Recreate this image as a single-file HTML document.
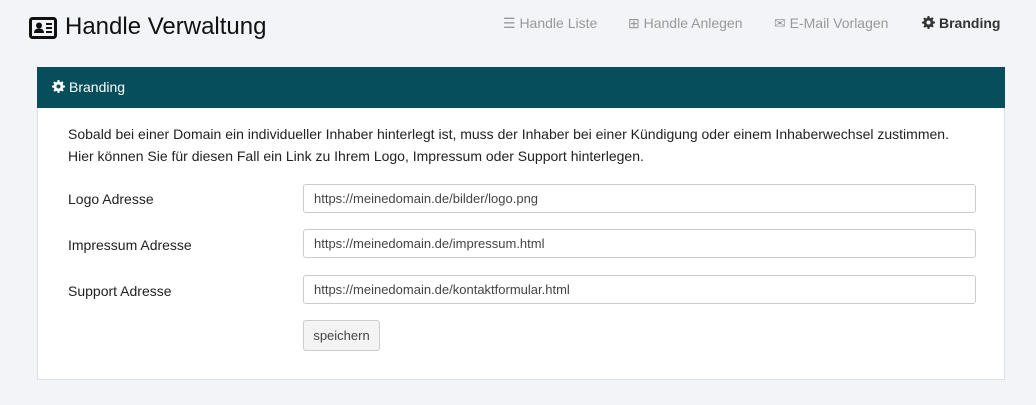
<!DOCTYPE html>
<html><head><style>
body{margin:0;background:#f3f4f8;font-family:"Liberation Sans",sans-serif;width:1036px;height:405px;overflow:hidden;position:relative}
.t{position:absolute;left:65px;top:13px;font-size:24px;color:#111}
.ic{position:absolute;left:29px;top:17px}
.nav{position:absolute;top:15px;font-size:14px;color:#999}
.panel{position:absolute;left:37px;top:67px;width:968px;height:313px;background:#fff;border:1px solid #dde0e4;box-sizing:border-box}
.hd{height:41px;background:#064e5b;color:#fff;font-size:14px;line-height:41px;padding-left:15px;margin:-1px -1px 0 -1px}
p{position:absolute;left:30px;top:55px;margin:0;font-size:14px;line-height:22px;color:#222}
.l{position:absolute;left:30px;font-size:14px;color:#222}
.in{position:absolute;left:265px;width:673px;height:29px;border:1px solid #ccc;border-radius:3px;box-sizing:border-box;font-size:13px;color:#444;line-height:27px;padding-left:10px}
.btn{position:absolute;left:265px;top:252px;width:77px;height:31px;border:1px solid #ccc;border-radius:3px;background:#f4f4f4;box-sizing:border-box;font-size:13px;color:#444;text-align:center;line-height:29px}
.g{display:inline-block;vertical-align:-1px;margin-right:4px}
</style></head><body>
<svg class="ic" width="28" height="22" viewBox="0 0 28 22"><rect x="1.5" y="1.5" width="25" height="19" rx="2" fill="none" stroke="#111" stroke-width="3"/><circle cx="10" cy="8.5" r="3" fill="#111"/><path d="M5 16c0-3 2-4.5 5-4.5s5 1.5 5 4.5z" fill="#111"/><rect x="17" y="6" width="6" height="2" fill="#111"/><rect x="17" y="10" width="6" height="2" fill="#111"/><rect x="17" y="14" width="6" height="2" fill="#111"/></svg>
<div class="t">Handle Verwaltung</div>
<div class="nav" style="left:503px">☰ Handle Liste</div>
<div class="nav" style="left:628px">⊞ Handle Anlegen</div>
<div class="nav" style="left:774px">✉ E-Mail Vorlagen</div>
<div class="nav" style="left:922px;color:#333;font-weight:bold"><svg class="g" width="13" height="13" viewBox="0 0 16 16"><path fill="#333" d="M7 0h2l.5 2.2 1.3.6 2-1.2 1.4 1.4-1.2 2 .6 1.3L16 7v2l-2.2.5-.6 1.3 1.2 2-1.4 1.4-2-1.2-1.3.6L9 16H7l-.5-2.2-1.3-.6-2 1.2-1.4-1.4 1.2-2-.6-1.3L0 9V7l2.2-.5.6-1.3-1.2-2 1.4-1.4 2 1.2 1.3-.6zM8 5.5a2.5 2.5 0 100 5 2.5 2.5 0 000-5z"/></svg>Branding</div>
<div class="panel">
<div class="hd"><svg class="g" width="13" height="13" viewBox="0 0 16 16"><path fill="#fff" d="M7 0h2l.5 2.2 1.3.6 2-1.2 1.4 1.4-1.2 2 .6 1.3L16 7v2l-2.2.5-.6 1.3 1.2 2-1.4 1.4-2-1.2-1.3.6L9 16H7l-.5-2.2-1.3-.6-2 1.2-1.4-1.4 1.2-2-.6-1.3L0 9V7l2.2-.5.6-1.3-1.2-2 1.4-1.4 2 1.2 1.3-.6zM8 5.5a2.5 2.5 0 100 5 2.5 2.5 0 000-5z"/></svg>Branding</div>
<p>Sobald bei einer Domain ein individueller Inhaber hinterlegt ist, muss der Inhaber bei einer Kündigung oder einem Inhaberwechsel zustimmen.<br>Hier können Sie für diesen Fall ein Link zu Ihrem Logo, Impressum oder Support hinterlegen.</p>
<div class="l" style="top:123px">Logo Adresse</div>
<div class="in" style="top:116px">https://meinedomain.de/bilder/logo.png</div>
<div class="l" style="top:169px">Impressum Adresse</div>
<div class="in" style="top:161px">https://meinedomain.de/impressum.html</div>
<div class="l" style="top:215px">Support Adresse</div>
<div class="in" style="top:207px">https://meinedomain.de/kontaktformular.html</div>
<div class="btn">speichern</div>
</div>
</body></html>
